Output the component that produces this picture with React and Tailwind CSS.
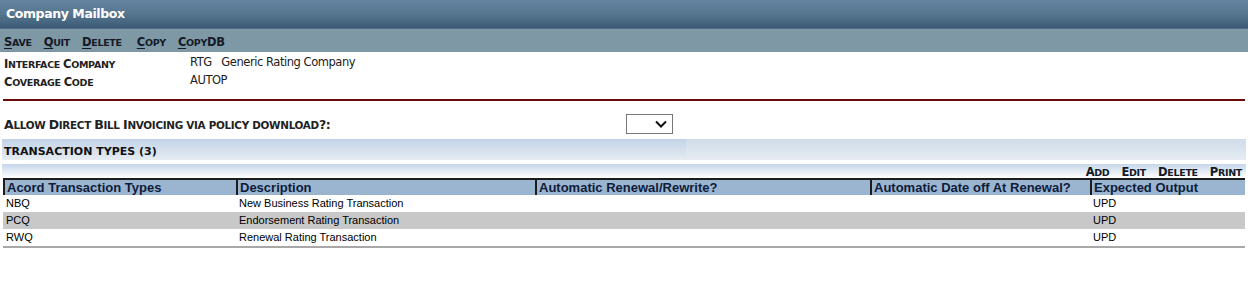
import React from "react";

function SC({ text, big, small, className = "" }) {
  const parts = [];
  let cur = null;
  for (const ch of text) {
    const isBig = ch !== ch.toLowerCase() || /[0-9?:()]/.test(ch);
    const kind = ch === " " ? (cur ? cur.kind : "s") : isBig ? "b" : "s";
    if (!cur || cur.kind !== kind) {
      cur = { kind, t: "" };
      parts.push(cur);
    }
    cur.t += ch;
  }
  return (
    <span className={"whitespace-pre " + className}>
      {parts.map((p, i) =>
        p.kind === "b" ? (
          <span key={i} className={big}>{p.t}</span>
        ) : (
          <span key={i} className={small + " uppercase"}>{p.t}</span>
        )
      )}
    </span>
  );
}

function Tool({ first, rest, className = "" }) {
  return (
    <span className={"whitespace-pre " + className}>
      <span className="text-[11.5px] underline underline-offset-[2px]">{first}</span>
      <SC text={rest} big="text-[11.5px]" small="text-[9.5px]" />
    </span>
  );
}

const rows = [
  { code: "NBQ", desc: "New Business Rating Transaction", out: "UPD", bg: "bg-white" },
  { code: "PCQ", desc: "Endorsement Rating Transaction", out: "UPD", bg: "bg-[#c8c8c8]" },
  { code: "RWQ", desc: "Renewal Rating Transaction", out: "UPD", bg: "bg-white" },
];

const cols = [
  { label: "Acord Transaction Types", w: "w-[233px]" },
  { label: "Description", w: "w-[299px]" },
  { label: "Automatic Renewal/Rewrite?", w: "w-[335px]" },
  { label: "Automatic Date off At Renewal?", w: "w-[220px]" },
  { label: "Expected Output", w: "flex-1" },
];

export default function App() {
  return (
    <div className="w-[1248px] h-[286px] bg-white overflow-hidden font-['DejaVu_Sans',sans-serif]">
      {/* Title bar */}
      <div className="h-[29px] bg-linear-to-b from-[#6584a0] via-[#56768f] to-[#3c5a76] border-b border-[#4e6e8b] flex items-center pl-[6px]">
        <span className="text-white font-bold text-[12.5px] tracking-[-0.4px]">Company Mailbox</span>
      </div>
      {/* Toolbar */}
      <div className="h-[23px] bg-[#7e98a6] flex items-center pl-[4px] gap-[12px] font-bold text-[#141a26] tracking-[-0.3px]">
        <Tool first="S" rest="ave" />
        <Tool first="Q" rest="uit" />
        <Tool first="D" rest="elete" className="mr-[3px]" />
        <Tool first="C" rest="opy" />
        <Tool first="C" rest="opyDB" />
      </div>
      {/* Info rows */}
      <div className="pt-[2px] pl-[4px]">
        <div className="h-[18px] flex items-center">
          <div className="w-[186px] font-bold text-[#222] tracking-[-0.3px]">
            <SC text="Interface Company" big="text-[11.5px]" small="text-[9.5px]" />
          </div>
          <span className="text-[#222] whitespace-pre text-[11.5px] tracking-[-0.45px]">RTG   Generic Rating Company</span>
        </div>
        <div className="h-[18px] flex items-center">
          <div className="w-[186px] font-bold text-[#222] tracking-[-0.3px]">
            <SC text="Coverage Code" big="text-[11.5px]" small="text-[9.5px]" />
          </div>
          <span className="text-[#222] text-[11.5px] tracking-[-0.45px]">AUTOP</span>
        </div>
      </div>
      {/* Red divider */}
      <div className="mt-[9px] mx-[3px] h-[2px] bg-[#6b0b0b]" />
      {/* Allow row */}
      <div className="mt-[13px] h-[20px] flex items-center pl-[4px]">
        <div className="w-[622px] font-bold text-[#222] tracking-[-0.3px]">
          <SC text="Allow Direct Bill Invoicing via policy download?:" big="text-[12.5px]" small="text-[10.4px]" />
        </div>
        <div className="w-[47px] h-[20px] border border-[#767676] bg-white flex items-center justify-end pr-[5px]">
          <svg width="12" height="8" viewBox="0 0 12 8">
            <path d="M1 1.5 L6 6.5 L11 1.5" fill="none" stroke="#111" strokeWidth="2" />
          </svg>
        </div>
      </div>
      {/* Section header */}
      <div className="mt-[5px] mx-[2px] h-[21px] flex">
        <div className="w-[684px] bg-linear-to-b from-[#c2d3e8] to-[#e6ecf1] flex items-end pb-[3px] pl-[2px]">
          <span className="font-bold text-[11px] text-[#111] leading-none">TRANSACTION TYPES (3)</span>
        </div>
        <div className="flex-1 bg-linear-to-b from-[#d0dcea] to-[#e6ecf1]" />
      </div>
      {/* Action band */}
      <div className="mt-[4px] mx-[2px] h-[14px] bg-linear-to-b from-[#c6d6e9] to-[#ffffff] flex items-center justify-end pr-[4px] gap-[12px] font-bold text-[#141a26] tracking-[-0.3px]">
        <SC text="Add" big="text-[11.5px]" small="text-[9.5px]" />
        <SC text="Edit" big="text-[11.5px]" small="text-[9.5px]" />
        <SC text="Delete" big="text-[11.5px]" small="text-[9.5px]" />
        <SC text="Print" big="text-[11.5px]" small="text-[9.5px]" />
      </div>
      {/* Table */}
      <div className="mx-[3px] font-['Liberation_Sans',Arial,sans-serif]">
        <div className="flex h-[17px]">
          {cols.map((c) => (
            <div
              key={c.label}
              className={
                c.w +
                " bg-[#9bb4d0] border-t-2 border-l-2 border-t-[#1c1c1c] border-l-[#1c1c1c] flex items-center pl-[2px] text-[13px] font-bold text-[#0e1c3a] leading-none whitespace-nowrap overflow-hidden"
              }
            >
              {c.label}
            </div>
          ))}
        </div>
        {rows.map((r) => (
          <div key={r.code} className={"flex h-[17px] items-center text-[11px] text-black " + r.bg}>
            <div className="w-[233px] pl-[3px]">{r.code}</div>
            <div className="w-[299px] pl-[3px]">{r.desc}</div>
            <div className="w-[335px]" />
            <div className="w-[220px]" />
            <div className="flex-1 pl-[3px]">{r.out}</div>
          </div>
        ))}
        <div className="h-[2px] bg-[#a8a8a8]" />
      </div>
    </div>
  );
}
